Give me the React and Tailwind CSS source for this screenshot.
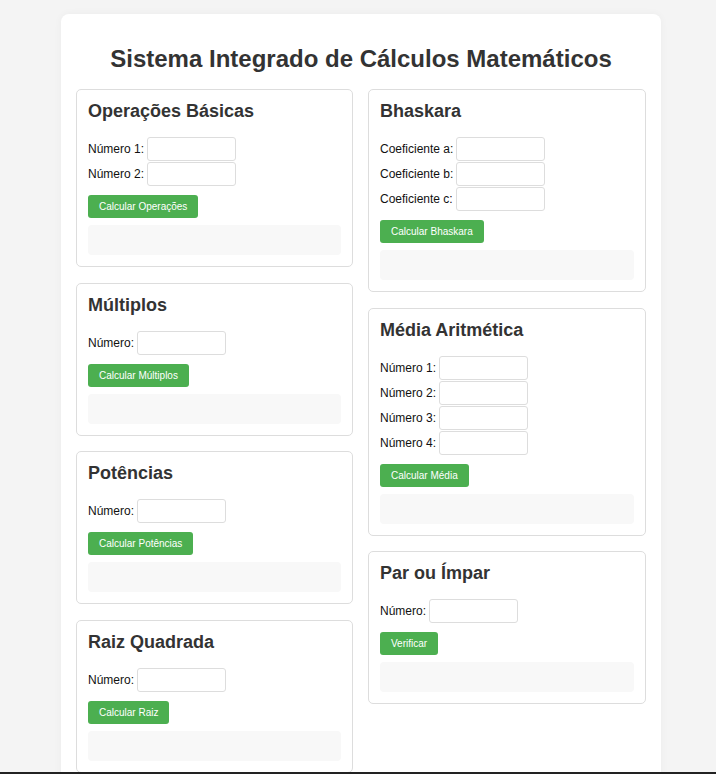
import React from 'react';

const leftCards = [
  { title: 'Operações Básicas', fields: ['Número 1:', 'Número 2:'], button: 'Calcular Operações' },
  { title: 'Múltiplos', fields: ['Número:'], button: 'Calcular Múltiplos' },
  { title: 'Potências', fields: ['Número:'], button: 'Calcular Potências' },
  { title: 'Raiz Quadrada', fields: ['Número:'], button: 'Calcular Raiz' },
];

const rightCards = [
  { title: 'Bhaskara', fields: ['Coeficiente a:', 'Coeficiente b:', 'Coeficiente c:'], button: 'Calcular Bhaskara' },
  { title: 'Média Aritmética', fields: ['Número 1:', 'Número 2:', 'Número 3:', 'Número 4:'], button: 'Calcular Média' },
  { title: 'Par ou Ímpar', fields: ['Número:'], button: 'Verificar' },
];

function Card({ title, fields, button }) {
  return (
    <div className="bg-white border border-[#dddddd] rounded-[5px] px-[11px] pt-[10px] pb-[11px]">
      <h2 className="text-[18px] leading-[22px] font-bold text-[#333333] mb-[15px]">{title}</h2>
      <div className="flex flex-col gap-[1px]">
        {fields.map((label) => (
          <div key={label} className="flex items-center">
            <label className="text-[12px] text-[#111111]">{label}</label>
            <input
              type="text"
              className="ml-[3px] h-[24px] w-[89px] border border-[#dddddd] rounded-[3px] bg-white px-1 text-[12px] outline-none"
            />
          </div>
        ))}
      </div>
      <button className="mt-[9px] h-[23px] px-[11px] bg-[#4caf50] text-white text-[10px] rounded-[3px]">
        {button}
      </button>
      <div className="mt-[7px] h-[30px] bg-[#f8f8f8] rounded-[4px]"></div>
    </div>
  );
}

export default function App() {
  return (
    <div
      className="min-h-screen bg-[#f4f4f4] flex justify-center pl-[6px] pt-[14px]"
      style={{ fontFamily: '"Liberation Sans", Arial, sans-serif' }}
    >
      <div className="w-[600px] bg-white rounded-[8px] px-[15px] pt-[31px] pb-[20px] shadow-[0_0_8px_rgba(0,0,0,0.04)] self-start">
        <h1 className="text-center text-[24px] leading-[28px] font-bold text-[#333333] mb-[16px]">
          Sistema Integrado de Cálculos Matemáticos
        </h1>
        <div className="grid grid-cols-[277px_278px] gap-x-[15px] items-start">
          <div className="flex flex-col gap-[15.5px]">
            {leftCards.map((c) => (
              <Card key={c.title} {...c} />
            ))}
          </div>
          <div className="flex flex-col gap-[15.5px]">
            {rightCards.map((c) => (
              <Card key={c.title} {...c} />
            ))}
          </div>
        </div>
      </div>
      <div className="fixed left-0 right-0 bottom-0 h-[2px] bg-[#222222]"></div>
    </div>
  );
}
